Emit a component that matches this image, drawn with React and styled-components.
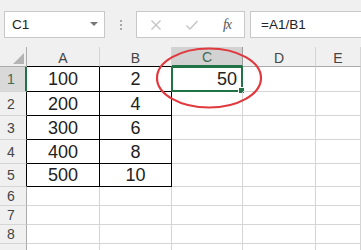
import React from "react"
import styled, { createGlobalStyle } from "styled-components"

const GREEN = "#217346"

const GlobalStyle = createGlobalStyle`
  html, body {
    margin: 0;
    padding: 0;
    background: #ffffff;
    overflow: hidden;
  }
  body {
    font-family: "Liberation Sans", Arial, sans-serif;
  }
`

const Page = styled.div`
  width: 361px;
  height: 250px;
  overflow: hidden;
  position: relative;
`

const TopBar = styled.div`
  height: 47px;
  background: #f0f0f0;
  display: flex;
  align-items: flex-start;
  padding: 11px 0 0 4px;
  box-sizing: border-box;
`

const NameBox = styled.div`
  width: 101px;
  height: 27px;
  box-sizing: border-box;
  background: #fff;
  border: 1px solid #c8c8c8;
  display: flex;
  align-items: center;
  justify-content: space-between;
  padding: 0 6px 0 7px;
  font-size: 13.5px;
  color: #222;
`

const Caret = styled.span`
  width: 0;
  height: 0;
  border-left: 4px solid transparent;
  border-right: 4px solid transparent;
  border-top: 4px solid #777;
  margin-top: -2px;
`

const Grip = styled.div`
  width: 31px;
  height: 27px;
  display: flex;
  flex-direction: column;
  align-items: center;
  justify-content: center;
  gap: 2px;
  span {
    width: 2px;
    height: 2px;
    background: #a9a9a9;
  }
`

const ButtonBox = styled.div`
  width: 109px;
  height: 27px;
  box-sizing: border-box;
  background: #fff;
  border: 1px solid #c8c8c8;
  display: flex;
  align-items: center;
  justify-content: space-between;
  padding: 0 13px 0 13px;
`

const Fx = styled.span`
  font-family: "Liberation Serif", "Times New Roman", serif;
  font-style: italic;
  font-size: 14px;
  color: #555;
  letter-spacing: -1px;
`

const FormulaBox = styled.div`
  flex: 1;
  height: 27px;
  margin-left: 5px;
  box-sizing: border-box;
  background: #fff;
  border: 1px solid #c8c8c8;
  border-right: none;
  display: flex;
  align-items: center;
  padding-left: 10px;
  font-size: 13.5px;
  color: #222;
`

const Grid = styled.div`
  display: grid;
  grid-template-columns: 27px 73px 72px 71px 73px 1fr;
  grid-template-rows: 20px 25px 24px 24px 24px 23px 19px 19px 19px 19px;
`

const Corner = styled.div`
  background: #f0f0f0;
  border-right: 1px solid #ababab;
  border-bottom: 1px solid #ababab;
  box-sizing: border-box;
  position: relative;
  &::after {
    content: "";
    position: absolute;
    right: 2px;
    bottom: 2px;
    border-left: 11px solid transparent;
    border-bottom: 11px solid #b4b4b4;
  }
`

const ColHead = styled.div`
  box-sizing: border-box;
  background: ${(p) => (p.$active ? "#d2d2d2" : "#f0f0f0")};
  border-right: 1px solid ${(p) => (p.$active ? "#9e9e9e" : "#d5d5d5")};
  border-bottom: ${(p) => (p.$active ? "2px" : "1px")} solid ${(p) => p.$edge};
  color: ${(p) => (p.$active ? "#3d6b52" : "#444")};
  font-size: 14px;
  display: flex;
  align-items: center;
  justify-content: center;
  padding-top: 2px;
`

const RowHead = styled.div`
  box-sizing: border-box;
  background: ${(p) => (p.$active ? "#d9d9d9" : "#f0f0f0")};
  border-right: ${(p) => (p.$active ? "2px" : "1px")} solid ${(p) => p.$edge};
  border-bottom: 1px solid #d5d5d5;
  color: ${(p) => (p.$active ? "#3d6b52" : "#444")};
  font-size: 14px;
  display: flex;
  align-items: center;
  padding-left: 7px;
`

const Cell = styled.div`
  box-sizing: border-box;
  border-right: 1px solid ${(p) => (p.$boxed ? "#000" : "#d5d5d5")};
  border-bottom: 1px solid ${(p) => (p.$boxed ? "#000" : "#d5d5d5")};
  font-size: 18px;
  color: #222;
  display: flex;
  align-items: center;
  justify-content: ${(p) => (p.$right ? "flex-end" : "center")};
  padding-right: ${(p) => (p.$right ? "5px" : "0")};
  padding-top: 1px;
  position: relative;
`

const Selection = styled.div`
  position: absolute;
  left: -1px;
  top: -1px;
  right: -1px;
  bottom: -1px;
  border: 2px solid ${GREEN};
  pointer-events: none;
`

const Handle = styled.div`
  position: absolute;
  right: -4px;
  bottom: -4px;
  width: 5px;
  height: 5px;
  background: ${GREEN};
  border: 1px solid #fff;
`

const Ring = styled.svg`
  position: absolute;
  left: 0;
  top: 0;
  pointer-events: none;
`

const cols = ["A", "B", "C", "D", "E"]
const data = [
  [100, 2],
  [200, 4],
  [300, 6],
  [400, 8],
  [500, 10],
]

const colEdge = (c) => {
  if (c === "C") return GREEN
  if (c === "A" || c === "B") return "#000"
  return "#ababab"
}

const rowEdge = (r) => {
  if (r === 1) return GREEN
  if (r <= 5) return "#000"
  return "#ababab"
}

const App = () => (
  <Page>
    <GlobalStyle />
    <TopBar>
      <NameBox>
        C1
        <Caret />
      </NameBox>
      <Grip>
        <span />
        <span />
        <span />
      </Grip>
      <ButtonBox>
        <svg width="12" height="12" viewBox="0 0 12 12">
          <path d="M1.5 1.5 L10.5 10.5 M10.5 1.5 L1.5 10.5" stroke="#c4c4c4" strokeWidth="1.4" fill="none" />
        </svg>
        <svg width="14" height="12" viewBox="0 0 14 12">
          <path d="M1.5 6.5 L5 10 L12.5 2" stroke="#c4c4c4" strokeWidth="1.4" fill="none" />
        </svg>
        <Fx>fx</Fx>
      </ButtonBox>
      <FormulaBox>=A1/B1</FormulaBox>
    </TopBar>
    <Grid>
      <Corner />
      {cols.map((c) => (
        <ColHead key={c} $active={c === "C"} $edge={colEdge(c)}>
          {c}
        </ColHead>
      ))}
      {Array.from({ length: 9 }, (_, i) => i + 1).map((r) => (
        <React.Fragment key={r}>
          {/* row 9 is cut by the window edge, its number is not visible */}
          <RowHead $active={r === 1} $edge={rowEdge(r)}>
            {r < 9 ? r : ""}
          </RowHead>
          {cols.map((c, ci) => {
            const boxed = r <= 5 && ci < 2
            const isSel = r === 1 && c === "C"
            return (
              <Cell key={c} $boxed={boxed} $right={isSel}>
                {boxed ? data[r - 1][ci] : isSel ? 50 : ""}
                {isSel && (
                  <Selection>
                    <Handle />
                  </Selection>
                )}
              </Cell>
            )
          })}
        </React.Fragment>
      ))}
    </Grid>
    <Ring width="361" height="250">
      <ellipse cx="209" cy="78" rx="52" ry="29.5" fill="none" stroke="#e0393e" strokeWidth="2.2" />
    </Ring>
  </Page>
)

export default App
